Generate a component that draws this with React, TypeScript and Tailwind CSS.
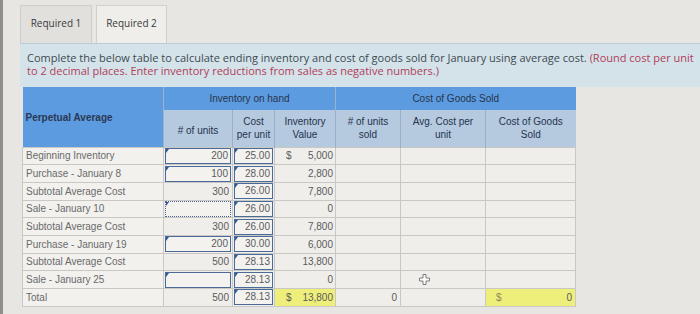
const rows = [
  { label: "Beginning Inventory", units: "200", unitsInput: true, cost: "25.00", dollar: true, value: "5,000" },
  { label: "Purchase - January 8", units: "100", unitsInput: true, cost: "28.00", value: "2,800" },
  { label: "Subtotal Average Cost", units: "300", cost: "26.00", value: "7,800" },
  { label: "Sale - January 10", units: "", unitsInput: true, dotted: true, cost: "26.00", value: "0" },
  { label: "Subtotal Average Cost", units: "300", cost: "26.00", value: "7,800" },
  { label: "Purchase - January 19", units: "200", unitsInput: true, cost: "30.00", value: "6,000" },
  { label: "Subtotal Average Cost", units: "500", cost: "28.13", value: "13,800" },
  { label: "Sale - January 25", units: "", unitsInput: true, cost: "28.13", value: "0", cursor: true },
  { label: "Total", units: "500", cost: "28.13", value: "13,800", total: true },
];

function Flag() {
  return <span className="absolute left-0 top-0 h-0 w-0 border-r-[3px] border-t-[4px] border-r-transparent border-t-[#2f5a98]" />;
}

function Cursor() {
  return (
    <svg width="11" height="11" viewBox="0 0 11 11" className="absolute left-[18px] top-[3px]">
      <path d="M4 0.5h3v3.5h3.5v3h-3.5v3.5h-3v-3.5h-3.5v-3h3.5z" fill="#fbfbfb" stroke="#7d7d7d" strokeWidth="1" />
    </svg>
  );
}

export default function App() {
  return (
    <div className="h-[314px] w-[700px] overflow-hidden border-l-[3px] border-[#8f8e8b] bg-[#e8e6e2] font-['Liberation_Sans',Arial,sans-serif]">
      <div className="flex gap-[4px] pl-[17px] pt-[5px]">
        <div className="flex h-[38px] w-[72px] items-center justify-center border border-b-0 border-[#cfcdca] bg-[#e1e0dc] pb-[2px] font-['Open_Sans',sans-serif] text-[10px] text-[#3a3a3a]">
          Required 1
        </div>
        <div className="flex h-[38px] w-[71px] items-center justify-center border border-b-0 border-[#d2d0cc] bg-[#efeeeb] pb-[2px] font-['Open_Sans',sans-serif] text-[10px] text-[#3a3a3a]">
          Required 2
        </div>
      </div>
      <div className="ml-[17px] h-[44px] border-t border-[#bcccd3] bg-[#d4e3e9] pl-[7px] pt-[7px] font-['Open_Sans',sans-serif] text-[11px] leading-[13px] whitespace-nowrap text-[#3e4a52]">
        <p>
          Complete the below table to calculate ending inventory and cost of goods sold for January using average cost.{" "}
          <span className="text-[#b0405a]">(Round cost per unit</span>
        </p>
        <p className="text-[#b0405a]">
          to 2 decimal places. Enter inventory reductions from sales as negative numbers.)
        </p>
      </div>
      <table className="ml-[19px] table-fixed border-collapse text-[10px] text-[#5b5b5b]">
        <colgroup>
          <col className="w-[141px]" />
          <col className="w-[69px]" />
          <col className="w-[42px]" />
          <col className="w-[61px]" />
          <col className="w-[65px]" />
          <col className="w-[85px]" />
          <col className="w-[90px]" />
        </colgroup>
        <thead className="text-[#26344d]">
          <tr className="h-[23px]">
            <th rowSpan={2} className="border-r border-[#9cb2cc] bg-[#5d9be0] pl-[3px] pt-[2px] text-left align-middle font-semibold text-[#2a3852]">Perpetual Average</th>
            <th colSpan={3} className="bg-[#5d9be0] font-normal">Inventory on hand</th>
            <th colSpan={3} className="border-l border-[#9cb2cc] bg-[#5d9be0] font-normal">Cost of Goods Sold</th>
          </tr>
          <tr className="h-[37px] bg-[#b5c9df] font-normal leading-[13px]">
            <th className="border-r border-[#9bafc7] font-normal">
              <span className="relative top-[2px]"># of units</span>
            </th>
            <th className="border-r border-[#9bafc7] font-normal">Cost<br />per unit</th>
            <th className="border-r border-[#9bafc7] font-normal">Inventory<br />Value</th>
            <th className="border-r border-[#9bafc7] font-normal"># of units<br />sold</th>
            <th className="border-r border-[#9bafc7] font-normal">Avg. Cost per<br />unit</th>
            <th className="font-normal">Cost of Goods<br />Sold</th>
          </tr>
        </thead>
        <tbody>
          {rows.map((r, i) => (
            <tr key={i} className="h-[17.7px]">
              <td className="border border-[#c9c8c4] bg-[#f2f1ee] pl-[3px] text-[#6a6a6a]">{r.label}</td>
              <td className="border border-[#c9c8c4] bg-[#efeeeb] p-0">
                {r.unitsInput ? (
                  <div className={`relative mx-[1px] h-[16px] border bg-[#f3f2ef] pr-[2px] text-right leading-[14px] ${r.dotted ? "border-dotted border-[#4a6690]" : "border-[#4a6a98]"}`}>
                    <Flag />
                    {r.units}
                  </div>
                ) : (
                  <div className="pr-[3px] text-right">{r.units}</div>
                )}
              </td>
              <td className="border border-[#c9c8c4] bg-[#efeeeb] p-0">
                <div className="relative mx-[1px] h-[16px] border border-[#4a6a98] bg-[#f3f2ef] pr-[2px] text-right leading-[14px]">
                  <Flag />
                  {r.cost}
                </div>
              </td>
              <td className={`border border-[#c9c8c4] p-0 ${r.total ? "bg-[#eeee7a]" : "bg-[#efeeeb]"}`}>
                <div className="flex justify-between pl-[11px] pr-[2px]">
                  <span>{r.dollar || r.total ? "$" : ""}</span>
                  <span>{r.value}</span>
                </div>
              </td>
              <td className="border border-[#c9c8c4] border-l-[#8d8c89] bg-[#efeeeb] pr-[3px] text-right">{r.total ? "0" : ""}</td>
              <td className="relative border border-[#c9c8c4] border-l-[#8d8c89] bg-[#efeeeb]">{r.cursor ? <Cursor /> : null}</td>
              <td className={`border border-[#c9c8c4] border-l-[#8d8c89] p-0 ${r.total ? "bg-[#eeee7a]" : "bg-[#efeeeb]"}`}>
                {r.total ? (
                  <div className="flex justify-between pl-[10px] pr-[3px]">
                    <span className="text-[#8a8a5a]">$</span>
                    <span>0</span>
                  </div>
                ) : null}
              </td>
            </tr>
          ))}
        </tbody>
      </table>
    </div>
  );
}
